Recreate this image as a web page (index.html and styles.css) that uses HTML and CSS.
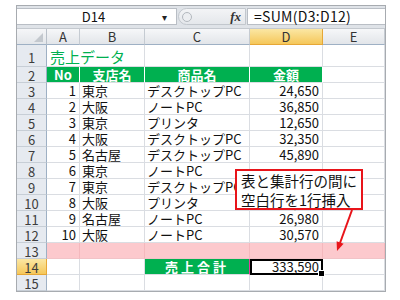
FILE: index.html
```html
<!DOCTYPE html>
<html lang="ja">
<head>
  <meta charset="UTF-8">
  <title>売上データ</title>
  <link rel="stylesheet" href="styles.css">
</head>
<body>
  <div class="window">
    <div class="formula-bar">
      <div class="name-box"><span class="cell-ref">D14</span><span class="drop">&#9662;</span></div>
      <div class="fx-area"><span class="knob"></span><span class="fx">fx</span></div>
      <div class="formula">=SUM(D3:D12)</div>
    </div>

    <div class="sheet">
      <div class="corner"></div>
      <div class="col-head">A</div>
      <div class="col-head">B</div>
      <div class="col-head">C</div>
      <div class="col-head active">D</div>
      <div class="col-head">E</div>

      <div class="row-head">1</div>
      <div class="cell title">売上データ</div>
      <div class="cell"></div>
      <div class="cell"></div>
      <div class="cell"></div>

      <div class="row-head">2</div>
      <div class="cell head">No</div>
      <div class="cell head">支店名</div>
      <div class="cell head">商品名</div>
      <div class="cell head">金額</div>
      <div class="cell"></div>

      <div class="row-head">3</div>
      <div class="cell num">1</div><div class="cell">東京</div><div class="cell">デスクトップPC</div><div class="cell num">24,650</div><div class="cell"></div>
      <div class="row-head">4</div>
      <div class="cell num">2</div><div class="cell">大阪</div><div class="cell">ノートPC</div><div class="cell num">36,850</div><div class="cell"></div>
      <div class="row-head">5</div>
      <div class="cell num">3</div><div class="cell">東京</div><div class="cell">プリンタ</div><div class="cell num">12,650</div><div class="cell"></div>
      <div class="row-head">6</div>
      <div class="cell num">4</div><div class="cell">大阪</div><div class="cell">デスクトップPC</div><div class="cell num">32,350</div><div class="cell"></div>
      <div class="row-head">7</div>
      <div class="cell num">5</div><div class="cell">名古屋</div><div class="cell">デスクトップPC</div><div class="cell num">45,890</div><div class="cell"></div>
      <!-- D8-D10 sit under the callout -->
      <div class="row-head">8</div>
      <div class="cell num">6</div><div class="cell">東京</div><div class="cell">ノートPC</div><div class="cell num"></div><div class="cell"></div>
      <div class="row-head">9</div>
      <div class="cell num">7</div><div class="cell">東京</div><div class="cell">デスクトップPC</div><div class="cell num"></div><div class="cell"></div>
      <div class="row-head">10</div>
      <div class="cell num">8</div><div class="cell">大阪</div><div class="cell">プリンタ</div><div class="cell num">34,900</div><div class="cell"></div>
      <div class="row-head">11</div>
      <div class="cell num">9</div><div class="cell">名古屋</div><div class="cell">ノートPC</div><div class="cell num">26,980</div><div class="cell"></div>
      <div class="row-head">12</div>
      <div class="cell num">10</div><div class="cell">大阪</div><div class="cell">ノートPC</div><div class="cell num">30,570</div><div class="cell"></div>

      <div class="row-head">13</div>
      <div class="cell blank"></div><div class="cell blank"></div><div class="cell blank"></div><div class="cell blank"></div><div class="cell blank"></div>

      <div class="row-head active">14</div>
      <div class="cell"></div>
      <div class="cell"></div>
      <div class="cell total-label">売上合計</div>
      <div class="cell num selected">333,590<span class="handle"></span></div>
      <div class="cell"></div>

      <div class="row-head">15</div>
      <div class="cell"></div><div class="cell"></div><div class="cell"></div><div class="cell"></div><div class="cell"></div>
    </div>
  </div>

  <div class="callout">表と集計行の間に<br>空白行を1行挿入</div>
  <svg class="arrow" width="30" height="46" viewBox="0 0 30 46">
    <line x1="22" y1="2" x2="10" y2="35" stroke="#e8141a" stroke-width="2"/>
    <polygon points="7,43 13.6,35.8 6.6,33.2" fill="#e8141a"/>
  </svg>
</body>
</html>
```

FILE: styles.css
```css
body {
  margin: 0;
  background: #fff;
  font-family: "Noto Sans CJK JP", "Noto Sans", sans-serif;
  font-size: 13px;
  color: #111;
}
.window {
  width: 370px;
  margin: 5px 0 0 16px;
  border: 1px solid #a7abb0;
  box-sizing: border-box;
}
.formula-bar {
  display: flex;
  height: 23px;
  padding-top: 2px;
  box-sizing: border-box;
  background: #dfe3e8;
  border-bottom: 1px solid #c4c9cf;
}
.name-box {
  width: 160px;
  height: 17px;
  background: #fff;
  border: 1px solid #b9bec5;
  border-left: none;
  box-sizing: border-box;
  display: flex;
  align-items: center;
  font-size: 13px;
}
.cell-ref {
  flex: 1;
  text-align: center;
  padding-left: 8px;
}
.drop {
  font-size: 10px;
  color: #222;
  width: 14px;
}
.fx-area {
  width: 68px;
  height: 17px;
  margin-left: 1px;
  display: flex;
  align-items: center;
  justify-content: space-between;
  border: 1px solid #c2c7cd;
  border-radius: 9px 0 0 9px;
  background: linear-gradient(#f3f4f6, #e4e7eb);
  box-sizing: border-box;
  padding: 0 4px 0 3px;
}
.knob {
  width: 8px;
  height: 8px;
  border-radius: 50%;
  border: 1px solid #b3b8be;
  background: #eceef1;
}
.fx {
  font-family: "Liberation Serif", serif;
  font-style: italic;
  font-weight: bold;
  font-size: 13px;
  color: #333;
}
.formula {
  flex: 1;
  height: 17px;
  margin-left: 1px;
  background: #fff;
  border: 1px solid #b9bec5;
  border-right: none;
  box-sizing: border-box;
  padding-left: 6px;
  line-height: 15px;
  font-size: 14px;
  letter-spacing: 0.3px;
}
.sheet {
  display: grid;
  grid-template-columns: 30px 33px 65px 105px 73px 62px;
  grid-template-rows: 16px 22px repeat(14, 16px);
}
.sheet > div {
  box-sizing: border-box;
  white-space: nowrap;
  overflow: visible;
}
.corner {
  background: linear-gradient(#f5f6f8, #e3e6ea);
  border-right: 1px solid #b9c0c9;
  border-bottom: 1px solid #9eb0c4;
  position: relative;
}
.corner::after {
  content: "";
  position: absolute;
  right: 3px;
  bottom: 2px;
  border-left: 9px solid transparent;
  border-bottom: 9px solid #c3c8ce;
}
.col-head {
  background: linear-gradient(#f6f7f9, #e2e5e9);
  border-right: 1px solid #c5cbd2;
  border-bottom: 1px solid #9eb0c4;
  text-align: center;
  line-height: 16px;
  font-size: 13px;
  color: #333;
}
.col-head.active,
.row-head.active {
  background: linear-gradient(#fbe7a4, #f5c75a);
  border-color: #e6a736;
}
.row-head {
  background: #e6eaf0;
  border-right: 1px solid #9eb0c4;
  border-bottom: 1px solid #c7ced6;
  text-align: center;
  line-height: 17px;
  font-size: 13px;
  color: #3d3d3d;
}
.sheet > .row-head:nth-child(7) {
  line-height: 26px;
}
.cell {
  border-right: 1px solid #dadde2;
  border-bottom: 1px solid #dadde2;
  line-height: 15px;
  padding: 0 2px;
  font-size: 13px;
}
.title {
  grid-column: span 2;
  color: #00b050;
  font-size: 15px;
  line-height: 24px;
  padding-left: 3px;
}
.head {
  background: #00b050;
  color: #fff;
  font-weight: bold;
  text-align: center;
  border-right-color: #fff;
  border-bottom-color: #dadde2;
}
.num {
  text-align: right;
  padding-right: 3px;
}
.blank {
  background: #fcc9cd;
  border-right-color: #f4b8bd;
  border-bottom-color: #f1c3c7;
}
.total-label {
  background: #00b050;
  color: #fff;
  font-weight: bold;
  text-align: center;
  letter-spacing: 3px;
  border-right: 1px solid #e040a0;
}
.selected {
  position: relative;
  border: 2px solid #000;
  line-height: 12px;
  padding-right: 2px;
}
.handle {
  position: absolute;
  right: -4px;
  bottom: -4px;
  width: 5px;
  height: 5px;
  background: #000;
  border: 1px solid #fff;
}
.callout {
  position: absolute;
  left: 235px;
  top: 169px;
  width: 128px;
  height: 41px;
  box-sizing: border-box;
  border: 2px solid #e8141a;
  background: #fff;
  padding: 0 0 0 4px;
  font-size: 14.5px;
  line-height: 19px;
  white-space: nowrap;
}
.arrow {
  position: absolute;
  left: 330px;
  top: 208px;
}
```
